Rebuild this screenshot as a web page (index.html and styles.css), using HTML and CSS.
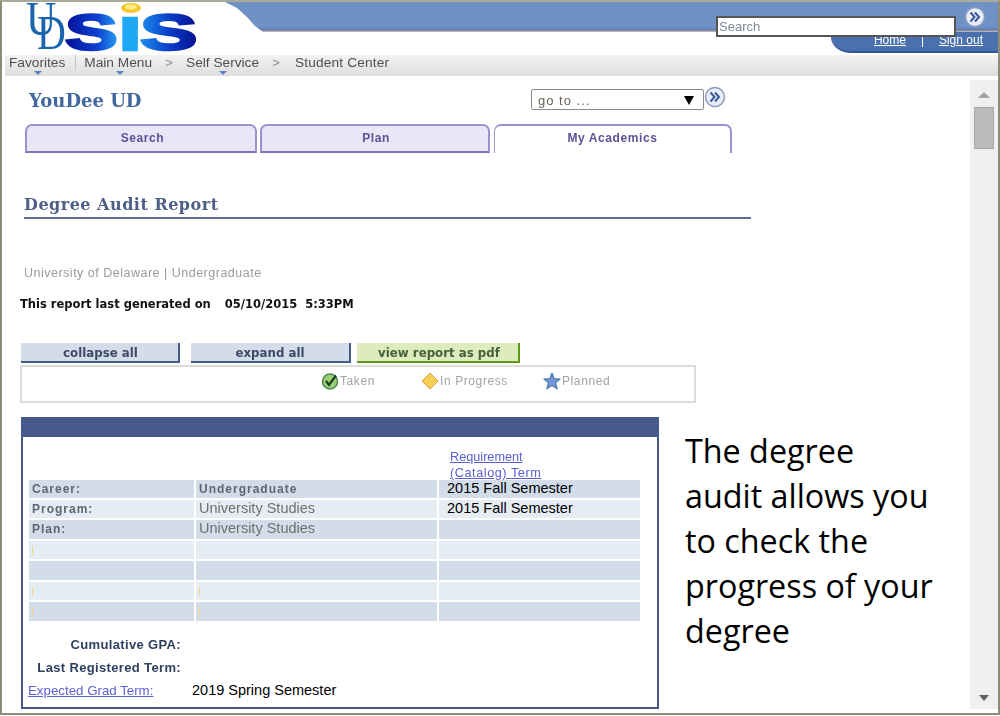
FILE: index.html
```html
<!DOCTYPE html>
<html>
  <head>
    <meta charset="utf-8">
    <title>Degree Audit Report</title>
    <link rel="stylesheet" href="styles.css">
  </head>
<body>
<div class="frame">
    <!-- header -->
    <div class="header">
        <svg class="logo" width="175" height="53" viewBox="0 0 175 53">
            <defs>
                <linearGradient id="sisblue" x1="0" x2="1" y1="0" y2="0">
                    <stop offset="0" stop-color="#06109a"></stop>
                    <stop offset="0.6" stop-color="#0a3fd0"></stop>
                    <stop offset="1" stop-color="#2a9cf0"></stop>
                </linearGradient>
                <linearGradient id="sisblue2" x1="0" x2="1" y1="0" y2="0">
                    <stop offset="0" stop-color="#1c8ff0"></stop>
                    <stop offset="0.5" stop-color="#0a3fc8"></stop>
                    <stop offset="1" stop-color="#060f90"></stop>
                </linearGradient>
            </defs>
            <text class="logo-ud" transform="translate(0 33) scale(1 1.15)">U</text>
            <text class="logo-ud" transform="translate(11 47) scale(.95 1.15)">D</text>
            <text class="logo-sis" transform="translate(39 47.5) scale(1.58 1)" fill="url(#sisblue)" stroke="url(#sisblue)">S</text>
            <text class="logo-sis" transform="translate(93 47.5) scale(1.6 .93)" fill="#1fa8f4" stroke="#1fa8f4">I</text>
            <text class="logo-sis" transform="translate(114 47.5) scale(1.72 1)" fill="url(#sisblue2)" stroke="url(#sisblue2)">S</text>
            <ellipse cx="105" cy="6" rx="10" ry="5" fill="#f4c92e"></ellipse>
            <ellipse cx="105" cy="5" rx="6" ry="2.5" fill="#fbe98a"></ellipse>
        </svg>
        <div class="header-right">
            <div class="bluebar"></div>
            <div class="hometab">
                <a href="#">Home</a>
                <span class="hometab-sep"></span>
                <a href="#">Sign out</a>
            </div>
        </div>
        <!-- search box sits over the bar -->
        <div class="searchbox">Search</div>
        <svg class="go-btn header-go" width="22" height="22" viewBox="0 0 22 22">
            <circle cx="11" cy="11" r="9.5" fill="#e8eef8" stroke="#8b9cc0" stroke-width="1.5"></circle>
            <path d="M6.5 6.5 L10.5 11 L6.5 15.5 M11 6.5 L15 11 L11 15.5" fill="none" stroke="#3b5a9a" stroke-width="2"></path>
        </svg>
    </div>

    <!-- breadcrumb -->
    <div class="nav">
        <span class="nav-item has-arrow nav-fav">Favorites</span>
        <span class="nav-item has-arrow nav-main">Main Menu</span>
        <span class="nav-chevron">&gt;</span>
        <span class="nav-item has-arrow nav-self">Self Service</span>
        <span class="nav-chevron">&gt;</span>
        <span class="nav-item nav-last">Student Center</span>
    </div>

    <div class="main">
        <div class="content">
            <div class="topline">
                <div class="username">YouDee UD</div>
                <div class="goto">
                    <div class="goto-select">go to ...<span class="goto-arrow"></span></div>
                    <svg class="go-btn goto-btn" width="22" height="22" viewBox="0 0 22 22">
                        <circle cx="11" cy="11" r="9.5" fill="#e8eef8" stroke="#8b9cc0" stroke-width="1.5"></circle>
                        <path d="M6.5 6.5 L10.5 11 L6.5 15.5 M11 6.5 L15 11 L11 15.5" fill="none" stroke="#3b5a9a" stroke-width="2"></path>
                    </svg>
                </div>
            </div>

            <div class="tabs">
                <div class="tab tab-search">Search</div>
                <div class="tab tab-plan">Plan</div>
                <div class="tab tab-active">My Academics</div>
            </div>

            <h1 class="title">Degree Audit Report</h1>
            <div class="institution">University of Delaware | Undergraduate</div>
            <div class="generated"><span>This report last generated on</span><span>05/10/2015&nbsp; 5:33PM</span></div>

            <div class="buttons">
                <div class="btn btn-collapse">collapse all</div>
                <div class="btn btn-expand">expand all</div>
                <div class="btn btn-pdf">view report as pdf</div>
            </div>

            <div class="legend">
                <span class="legend-item legend-taken">
                    <svg width="18" height="18" viewBox="0 0 18 18">
                        <circle cx="9" cy="9.5" r="7.5" fill="#9ccf7a" stroke="#4d8a4a" stroke-width="1.5"></circle>
                        <path d="M5 9 L8 13 L15 3.5" fill="none" stroke="#17401f" stroke-width="2.2"></path>
                    </svg>Taken
                </span>
                <span class="legend-item legend-progress">
                    <svg width="18" height="18" viewBox="0 0 18 18">
                        <path d="M9 1 L17 9 L9 17 L1 9 Z" fill="#f8cf56" stroke="#d99f35" stroke-width="1"></path>
                    </svg>In Progress
                </span>
                <span class="legend-item legend-planned">
                    <svg width="18" height="18" viewBox="0 0 18 18">
                        <path d="M9 1 L11.3 6.8 L17.3 7 L12.6 10.8 L14.3 17 L9 13.5 L3.7 17 L5.4 10.8 L.7 7 L6.7 6.8 Z" fill="#6f97d2" stroke="#3f68a8" stroke-width="1"></path>
                    </svg>Planned
                </span>
            </div>

            <div class="report-row">
                <div class="panel">
                    <div class="panel-head"></div>
                    <div class="panel-body">
                        <div class="req-link"><a href="#">Requirement<br><span class="req-wide">(Catalog) Term</span></a></div>
                        <table class="audit">
                            <tr class="dark">
                                <td class="lbl">Career:</td>
                                <td class="lbl">Undergraduate</td>
                                <td class="val">2015 Fall Semester</td>
                            </tr>
                            <tr class="light">
                                <td class="lbl">Program:</td>
                                <td class="sub">University Studies</td>
                                <td class="val">2015 Fall Semester</td>
                            </tr>
                            <tr class="dark tall">
                                <td class="lbl">Plan:</td>
                                <td class="sub">University Studies</td>
                                <td></td>
                            </tr>
                            <tr class="light">
                                <td><span class="tick"></span></td>
                                <td></td>
                                <td></td>
                            </tr>
                            <tr class="dark tall">
                                <td></td>
                                <td></td>
                                <td></td>
                            </tr>
                            <tr class="light">
                                <td><span class="tick"></span></td>
                                <td><span class="tick"></span></td>
                                <td></td>
                            </tr>
                            <tr class="dark tall">
                                <td><span class="tick"></span></td>
                                <td><span class="tick"></span></td>
                                <td></td>
                            </tr>
                        </table>
                        <div class="summary">
                            <div class="sum-label">Cumulative GPA:</div>
                            <div></div>
                            <div class="sum-label">Last Registered Term:</div>
                            <div></div>
                            <div class="sum-link"><a href="#">Expected Grad Term:</a></div>
                            <div class="sum-val">2019 Spring Semester</div>
                        </div>
                    </div>
                </div>
                <div class="callout">The degree audit allows you to check the progress of your degree</div>
            </div>
        </div>

        <!-- scrollbar -->
        <div class="scrollbar">
            <span class="arrow-up"></span>
            <span class="thumb"></span>
            <span class="arrow-down"></span>
        </div>
    </div>
</div>
</body>
</html>
```

FILE: styles.css
```css
* {
    box-sizing: border-box;
}
html, body {
    margin: 0;
    padding: 0;
    background: #fff;
}
body {
    width: 1000px;
    height: 716px;
    overflow: hidden;
    font-family: "Liberation Sans", Arial, sans-serif;
}
.frame {
    width: 1000px;
    height: 715px;
    border-top: 2px solid #a9a99c;
    border-left: 2px solid #8d8d76;
    border-right: 2px solid #8d8d76;
    border-bottom: 2px solid #8d8d76;
    display: flex;
    flex-direction: column;
    overflow: hidden;
}

/* the reference is a soft, rescaled capture */
.logo, .nav, .hometab, .username, .goto-select, .tab, .title, .institution, .generated, .btn, .legend, .req-link, .lbl, .sub, .sum-label, .sum-link, .searchbox {
    filter: blur(.4px);
}

/* header */
.header {
    position: relative;
    height: 53px;
    display: flex;
}
.logo {
    margin-left: 24px;
    width: 175px;
    flex: none;
    overflow: visible;
}
.logo-ud {
    font-family: "Liberation Serif", serif;
    font-size: 42px;
    fill: #1a64ae;
}
.logo-sis {
    font-family: "Liberation Sans", sans-serif;
    font-weight: bold;
    font-size: 50px;
    stroke-width: 2.5;
}
.header-right {
    flex: 1;
    display: flex;
    flex-direction: column;
}
.bluebar {
    height: 30px;
    background: linear-gradient(to bottom, #6f92c6 0, #6f92c6 25px, #5f7fb5 27px, #8f8f98 29px, #d5d5d5 30px);
    clip-path: polygon(24px 0, 36px 6px, 46px 15px, 54px 24px, 62px 30px, 100% 30px, 100% 0);
}
.hometab {
    align-self: flex-end;
    width: 167px;
    height: 21px;
    background: #4a70ae;
    border-bottom: 2px solid #33549a;
    border-bottom-left-radius: 20px 16px;
    display: flex;
    justify-content: flex-end;
    align-items: flex-end;
    padding: 0 15px 4px 0;
    font-size: 12px;
}
.hometab a {
    color: #fff;
}
.hometab-sep {
    width: 1px;
    height: 12px;
    background: #fff;
    margin: 0 16px 0 16px;
}
.searchbox {
    position: absolute;
    left: 714px;
    top: 14px;
    width: 240px;
    height: 21px;
    background: #fff;
    border: 2px solid #555;
    font-size: 13px;
    line-height: 17px;
    color: #7c8a9c;
    padding-left: 1px;
}
.header-go {
    position: absolute;
    left: 962px;
    top: 4px;
}

/* breadcrumb */
.nav {
    height: 21px;
    margin-left: 3px;
    padding-bottom: 7px;
    background: linear-gradient(to bottom, #f2f2f2, #dedede);
    display: flex;
    align-items: center;
    font-size: 13.7px;
    color: #4f4f4f;
}
.nav-item {
    position: relative;
    white-space: nowrap;
}
.nav-fav {
    margin-left: 4px;
    padding-right: 10px;
    border-right: 1px solid #c4c4c4;
}
.nav-main {
    margin-left: 8px;
}
.nav-last {
    margin-left: 2px;
    letter-spacing: .15px;
}
.nav-chevron {
    width: 34px;
    text-align: center;
    color: #8b8b8b;
    font-size: 13px;
}
.has-arrow::after {
    content: "";
    position: absolute;
    left: 50%;
    bottom: -5px;
    margin-left: -4px;
    border-left: 4px solid transparent;
    border-right: 4px solid transparent;
    border-top: 4px solid #5b83c0;
}
.nav-fav::after {
    margin-left: -8px;
}
.nav-main::after {
    margin-left: -2px;
}

/* main area */
.main {
    flex: 1;
    display: flex;
    min-height: 0;
}
.content {
    flex: 1;
    padding-left: 18px;
    min-width: 0;
}
.scrollbar {
    width: 28px;
    margin-top: 4px;
    margin-bottom: 4px;
    background: #f0f0f0;
    display: flex;
    flex-direction: column;
    align-items: center;
    padding-top: 12px;
    flex: none;
}
.arrow-up {
    border-left: 6px solid transparent;
    border-right: 6px solid transparent;
    border-bottom: 6px solid #a3a3a3;
}
.thumb {
    width: 20px;
    height: 42px;
    margin-top: 9px;
    background: #bcbcbc;
    border: 1px solid #a6a6a6;
}
.arrow-down {
    margin-top: auto;
    margin-bottom: 8px;
    border-left: 5px solid transparent;
    border-right: 5px solid transparent;
    border-top: 6px solid #606060;
}
.topline {
    width: 703px;
    height: 48px;
    display: flex;
    justify-content: space-between;
    align-items: flex-start;
    padding: 13px 0 0 9px;
}
.username {
    font-family: "DejaVu Serif", serif;
    font-weight: bold;
    font-size: 18px;
    color: #41679f;
    line-height: 22px;
    margin-top: 1px;
}
.goto {
    display: flex;
    align-items: flex-start;
    margin-right: -3px;
}
.goto-select {
    width: 173px;
    height: 21px;
    border: 1px solid #8b8b8b;
    border-radius: 2px;
    font-size: 13px;
    letter-spacing: 1px;
    line-height: 21px;
    color: #6b6258;
    padding-left: 6px;
    position: relative;
    background: #fff;
}
.goto-btn {
    margin: -3px 0 0 0;
}
.goto-arrow {
    position: absolute;
    right: 9px;
    top: 6px;
    border-left: 5px solid transparent;
    border-right: 5px solid transparent;
    border-top: 9px solid #000;
}

/* tabs */
.tabs {
    display: flex;
    height: 29px;
    margin-left: 5px;
    gap: 3px;
    width: 707px;
}
.tab {
    height: 29px;
    border: 2px solid #9a92cf;
    border-radius: 7px 7px 0 0;
    background: #e9e7f7;
    font-size: 12px;
    font-weight: bold;
    color: #5b5298;
    letter-spacing: 0.6px;
    text-align: center;
    line-height: 25px;
}
.tab-search {
    width: 232px;
    padding-left: 3px;
}
.tab-plan {
    width: 230px;
    padding-left: 2px;
    margin-right: 1px;
}
.tab-active {
    width: 238px;
    background: #fff;
    border-bottom: 0;
    border-left-width: 1px;
}
.tab-search, .tab-plan {
    border-bottom: 2px solid #7c74bd;
}

/* title block */
.title {
    width: 727px;
    margin: 42px 0 0 4px;
    padding: 0 0 3px 0;
    height: 24px;
    border-bottom: 2px solid #5e6c9c;
    font-family: "DejaVu Serif", serif;
    font-size: 16px;
    line-height: 20px;
    font-weight: bold;
    letter-spacing: .5px;
    color: #4d5f86;
}
.institution {
    margin: 46px 0 0 4px;
    font-size: 12.5px;
    letter-spacing: .5px;
    line-height: 16px;
    color: #9a9a9a;
}
.generated {
    margin-top: 15px;
    display: flex;
    gap: 14px;
    font-family: "DejaVu Sans", sans-serif;
    font-size: 11.5px;
    font-weight: bold;
    line-height: 16px;
    color: #111;
}

/* buttons */
.buttons {
    display: flex;
    margin: 31px 0 0 1px;
}
.btn {
    height: 20px;
    border-right: 2px solid #45598a;
    border-bottom: 2px solid #45598a;
    background: #d3dce9;
    font-family: "DejaVu Sans", sans-serif;
    font-size: 11.8px;
    font-weight: bold;
    color: #3f4a66;
    text-align: center;
    line-height: 20px;
}
.btn-collapse {
    width: 159px;
    margin-right: 11px;
    padding-left: 2px;
}
.btn-expand {
    width: 160px;
    margin-right: 6px;
}
.btn-pdf {
    width: 163px;
    padding-left: 3px;
    background: #deebbd;
    color: #45603a;
    border-color: #5f9a16;
}
.legend {
    position: relative;
    width: 676px;
    height: 38px;
    margin-top: 2px;
    border: 2px solid #dcdcdc;
    display: flex;
    align-items: center;
    padding: 0 0 6px 299px;
    font-size: 12px;
    letter-spacing: .6px;
    color: #a3a3a3;
}
.legend-item {
    display: flex;
    align-items: center;
}
.legend-taken {
    width: 100px;
}
.legend-progress {
    width: 122px;
}
.legend-taken svg {
    margin-right: 1px;
}
.legend-progress svg, .legend-planned svg {
    margin-right: 1px;
}

/* report */
.report-row {
    display: flex;
    margin-top: 14px;
    margin-left: 1px;
}
.panel {
    width: 638px;
    height: 292px;
    border: 2px solid #47598a;
    flex: none;
}
.panel-head {
    height: 18px;
    background: #47598a;
}
.panel-body {
    padding: 12px 0 0 6px;
}
.req-link {
    margin-left: 421px;
    height: 32px;
    font-size: 12.7px;
    line-height: 16px;
}
.req-wide {
    letter-spacing: .55px;
}
.req-link a, .sum-link a {
    color: #5b5fd0;
}
.audit {
    border-collapse: separate;
    border-spacing: 2px;
    margin-left: -2px;
    margin-top: -3px;
    table-layout: fixed;
    width: 615px;
}
.audit td {
    height: 18px;
    padding: 0 0 0 3px;
    line-height: 16px;
    font-size: 12px;
    vertical-align: top;
}
.audit .tall td {
    height: 19px;
}
.audit td:nth-child(1) {
    width: 165px;
}
.audit td:nth-child(2) {
    width: 241px;
}
.dark td {
    background: #d3dce9;
}
.light td {
    background: #e6ecf4;
}
.audit td.lbl {
    font-weight: bold;
    letter-spacing: 1px;
    color: #5c6674;
    line-height: 18px;
}
.audit td.sub {
    font-size: 14.5px;
    color: #6f6f6f;
    line-height: 16px;
}
.audit td.val {
    font-size: 14.5px;
    color: #000;
    padding-left: 8px;
    line-height: 17px;
}
.tick {
    display: block;
    width: 1px;
    height: 9px;
    margin-top: 5px;
    background: #f2d68a;
}
.summary {
    display: grid;
    grid-template-columns: 152px 1fr;
    grid-auto-rows: 23px;
    margin-top: 10px;
    font-size: 13px;
    letter-spacing: .35px;
    line-height: 23px;
}
.sum-label {
    text-align: right;
    font-weight: bold;
    color: #2d3f5f;
}
.sum-link {
    font-size: 13.3px;
    letter-spacing: 0;
    margin-left: -1px;
    white-space: nowrap;
}
.sum-val {
    margin-left: 11px;
    font-size: 14.5px;
    letter-spacing: 0;
    color: #000;
}
.callout {
    width: 250px;
    margin: 11px 0 0 26px;
    font-family: "Open Sans", sans-serif;
    font-size: 32.3px;
    line-height: 45px;
    color: #000;
}
```
